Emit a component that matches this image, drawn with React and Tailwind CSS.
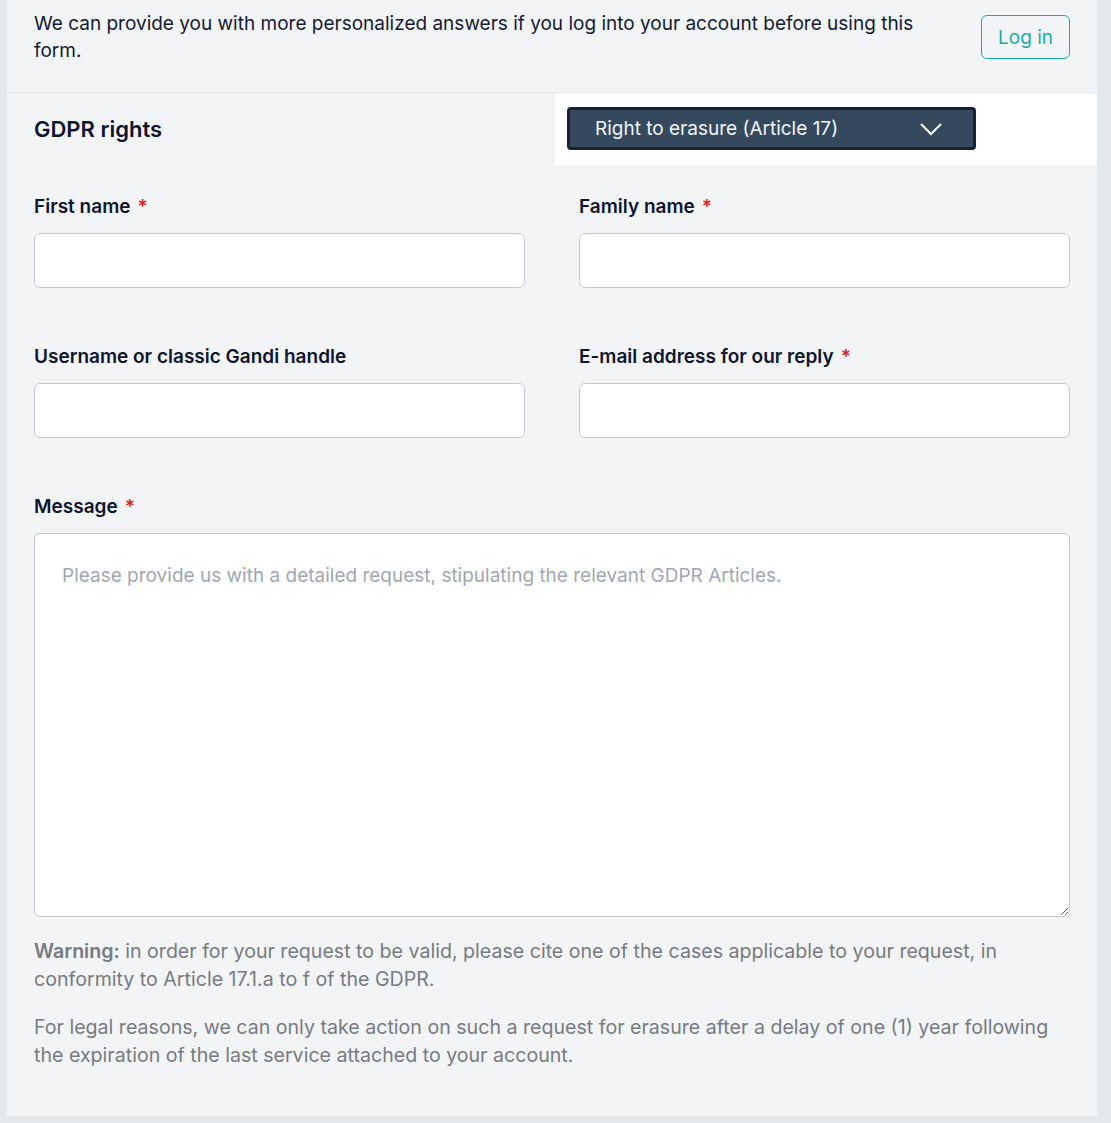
const Label = ({ children, required }) => (
  <label className="block text-[19px] leading-[27px] font-semibold text-[#0d1530] mb-[13px]">
    {children}
    {required && <span className="text-[#dc1f1f] ml-[7px]">*</span>}
  </label>
);

const Input = () => (
  <input
    type="text"
    className="block w-full h-[55px] bg-white border border-[#c6c8ce] rounded-[6px] px-[16px] text-[19px] outline-none"
  />
);

export default function App() {
  return (
    <div
      className="min-h-[1123px] bg-[#e6e9ec] pl-[7px] pr-[14px] pb-[7px]"
      style={{ fontFamily: "Inter, 'Noto Sans', sans-serif" }}
    >
      <div className="bg-[#f3f4f6] h-[1116px]">
        <div className="h-[93px] flex justify-between items-start px-[27px] pt-[10px] border-b border-[#e3e6ea]">
          <p className="text-[19px] leading-[27px] text-[#141a33] w-[900px]">
            We can provide you with more personalized answers if you log into your account before using this form.
          </p>
          <button className="mt-[5px] h-[44px] w-[89px] border border-[#1aaeaa] rounded-[6px] text-[#1aaeaa] text-[19px] pt-[2px] bg-transparent">
            Log in
          </button>
        </div>

        <div className="flex h-[72px]">
          <div className="w-[546px] flex items-center px-[27px]">
            <h2 className="text-[22px] font-semibold text-[#0d1530]">GDPR rights</h2>
          </div>
          <div className="flex-1 bg-white border-l border-[#e8eaed] pl-[13px] pt-[14px]">
            <div className="w-[409px] h-[43px] rounded-[4px] border-[3px] border-[#1b2130] bg-[#35495e] flex items-center justify-between pl-[25px] pr-[30px]">
              <span className="text-[19px] text-[#f2f4f7] pt-[1px]">Right to erasure (Article 17)</span>
              <svg width="24" height="14" viewBox="0 0 24 14" fill="none">
                <polyline points="2,2 12,12 22,2" stroke="#ffffff" strokeWidth="2" />
              </svg>
            </div>
          </div>
        </div>

        <div className="px-[27px] pt-[28px]">
          <div className="grid grid-cols-2 gap-x-[54px] gap-y-[55px]">
            <div>
              <Label required>First name</Label>
              <Input />
            </div>
            <div>
              <Label required>Family name</Label>
              <Input />
            </div>
            <div>
              <Label>Username or classic Gandi handle</Label>
              <Input />
            </div>
            <div>
              <Label required>E-mail address for our reply</Label>
              <Input />
            </div>
          </div>

          <div className="mt-[55px]">
            <Label required>Message</Label>
            <textarea
              className="block w-full h-[384px] bg-white border border-[#c6c8ce] rounded-[6px] px-[27px] pt-[28px] text-[19px] leading-[27px] outline-none placeholder:text-[#a3a7b1]"
              placeholder="Please provide us with a detailed request, stipulating the relevant GDPR Articles."
            />
          </div>

          <p className="mt-[20px] text-[19.6px] leading-[28px] text-[#777b82]">
            <span className="font-semibold">Warning:</span> in order for your request to be valid, please cite one of the cases applicable to your request, in conformity to Article 17.1.a to f of the GDPR.
          </p>
          <p className="mt-[20px] text-[19.6px] leading-[28px] text-[#777b82]">
            For legal reasons, we can only take action on such a request for erasure after a delay of one (1) year following the expiration of the last service attached to your account.
          </p>
        </div>
      </div>
    </div>
  );
}
